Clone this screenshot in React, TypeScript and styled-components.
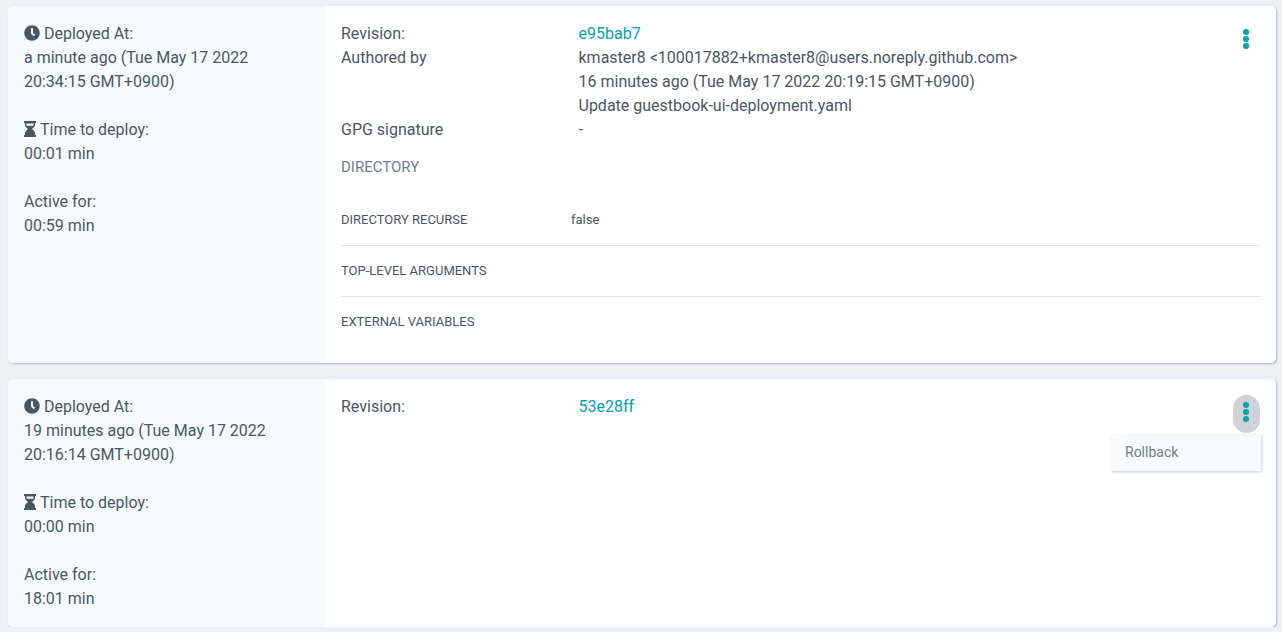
import { createGlobalStyle } from "styled-components";
import styled from "styled-components";
import { FaClock } from "react-icons/fa";

const Global = createGlobalStyle`
  html, body {
    margin: 0;
    padding: 0;
    background: #eef1f4;
    font-family: Roboto, "Liberation Sans", sans-serif;
    font-size: 16px;
    color: #495763;
    overflow: hidden;
  }
`;

const deployments = [
  { ago: "a minute ago", at: "20:34:15", deploy: "00:01 min", active: "00:59 min", rev: "e95bab7", open: false },
  { ago: "19 minutes ago", at: "20:16:14", deploy: "00:00 min", active: "18:01 min", rev: "53e28ff", open: true },
];

const App = () => {
  return (
    <Page>
      <Global />
      {deployments.map((d) => (
        <Card key={d.rev}>
          <Side>
            <Group>
              <div><ClockIcon /> Deployed At:</div>
              <div>{d.ago} (Tue May 17 2022 {d.at} GMT+0900)</div>
            </Group>
            <Group>
              <div>
                <GlassIcon viewBox="0 0 12 16" fill="currentColor">
                  <path d="M0 0h12v2h-1v1.5c0 2-1.4 3.4-3 4.5 1.6 1.1 3 2.5 3 4.5V14h1v2H0v-2h1v-1.500c0-2 1.4-3.400 3-4.500C2.400 6.900 1 5.500 1 3.500V2H0z" />
                  <path fill="#f5fafd" d="M2.500 2.500h7v1c0 .4 0 .8-.2 1.200H2.700c-.2-.4-.2-.8-.2-1.200z" />
                </GlassIcon>
                Time to deploy:
              </div>
              <div>{d.deploy}</div>
            </Group>
            <Group>
              <div>Active for:</div>
              <div>{d.active}</div>
            </Group>
          </Side>
          <Body>
            <Kebab $active={d.open}>
              <svg width="6" height="20" viewBox="0 0 6 20" fill="currentColor">
                <circle cx="3" cy="3" r="3" />
                <circle cx="3" cy="10" r="3" />
                <circle cx="3" cy="17" r="3" />
              </svg>
            </Kebab>
            {d.open && (
              <Menu>
                <MenuItem>Rollback</MenuItem>
              </Menu>
            )}
            <Row>
              <Label>Revision:</Label>
              <RevLink>{d.rev}</RevLink>
            </Row>
            {!d.open && (
              <>
                <Row>
                  <Label>Authored by</Label>
                  <div>
                    <div>kmaster8 &lt;100017882+kmaster8@users.noreply.github.com&gt;</div>
                    <div>16 minutes ago (Tue May 17 2022 20:19:15 GMT+0900)</div>
                    <div>Update guestbook-ui-deployment.yaml</div>
                  </div>
                </Row>
                <Row>
                  <Label>GPG signature</Label>
                  <div>-</div>
                </Row>
                <SectionTitle>DIRECTORY</SectionTitle>
                <Params>
                  <Param>
                    <ParamName>DIRECTORY RECURSE</ParamName>
                    <ParamValue>false</ParamValue>
                  </Param>
                  <Param>
                    <ParamName>TOP-LEVEL ARGUMENTS</ParamName>
                  </Param>
                  <Param>
                    <ParamName>EXTERNAL VARIABLES</ParamName>
                  </Param>
                </Params>
              </>
            )}
          </Body>
        </Card>
      ))}
    </Page>
  );
};

export default App;

const Page = styled.div`
  display: flex;
  flex-direction: column;
  gap: 16px;
  padding: 6px 6px 0 8px;
`;
const Card = styled.div`
  display: flex;
  background: #fff;
  border-radius: 5px;
  box-shadow: 1px 1px 2px #a9b5bf;
  overflow: hidden;
`;
const Side = styled.div`
  width: 317px;
  flex-shrink: 0;
  box-sizing: border-box;
  padding: 16px;
  background: #f5fafd;
  line-height: 24px;
  display: flex;
  flex-direction: column;
  gap: 24px;
`;
const Group = styled.div``;
const ClockIcon = styled(FaClock)`
  font-size: 16px;
  vertical-align: -2px;
`;
const GlassIcon = styled.svg`
  width: 12px;
  height: 16px;
  vertical-align: -2px;
  margin-right: 4px;
  margin-left: 0;
`;
const Body = styled.div`
  flex: 1;
  position: relative;
  padding: 16px 16px 16px;
  line-height: 24px;
`;
const Kebab = styled.div<{ $active: boolean }>`
  position: absolute;
  top: 16px;
  right: 16px;
  width: 27px;
  height: 38px;
  box-sizing: border-box;
  padding: 0 1px 4px 0;
  border-radius: 14px;
  display: flex;
  align-items: center;
  justify-content: center;
  color: #00a2b3;
  background: ${(p) => (p.$active ? "#cfd3d7" : "transparent")};
`;
const Menu = styled.div`
  position: absolute;
  top: 56px;
  right: 15px;
  width: 150px;
  background: #f8fafb;
  box-shadow: 1px 1px 3px #c4ccd2;
`;
const MenuItem = styled.div`
  padding: 5px 14px 7px;
  font-size: 14px;
  color: #6d7f8b;
`;
const Row = styled.div`
  display: grid;
  grid-template-columns: 237.500px 1fr;
`;
const Label = styled.div``;
const RevLink = styled.a`
  color: #00a2b3;
`;
const SectionTitle = styled.div`
  margin-top: 13px;
  font-size: 15px;
  color: #6d7f8b;
`;
const Params = styled.div`
  margin-top: 16px;
`;
const Param = styled.div`
  display: grid;
  grid-template-columns: 230px 1fr;
  align-items: center;
  height: 50px;
  font-size: 13px;
  border-bottom: 1px solid #dee6eb;
  &:last-child {
    border-bottom: 0;
  }
`;
const ParamName = styled.div`
  color: #495763;
`;
const ParamValue = styled.div``;
